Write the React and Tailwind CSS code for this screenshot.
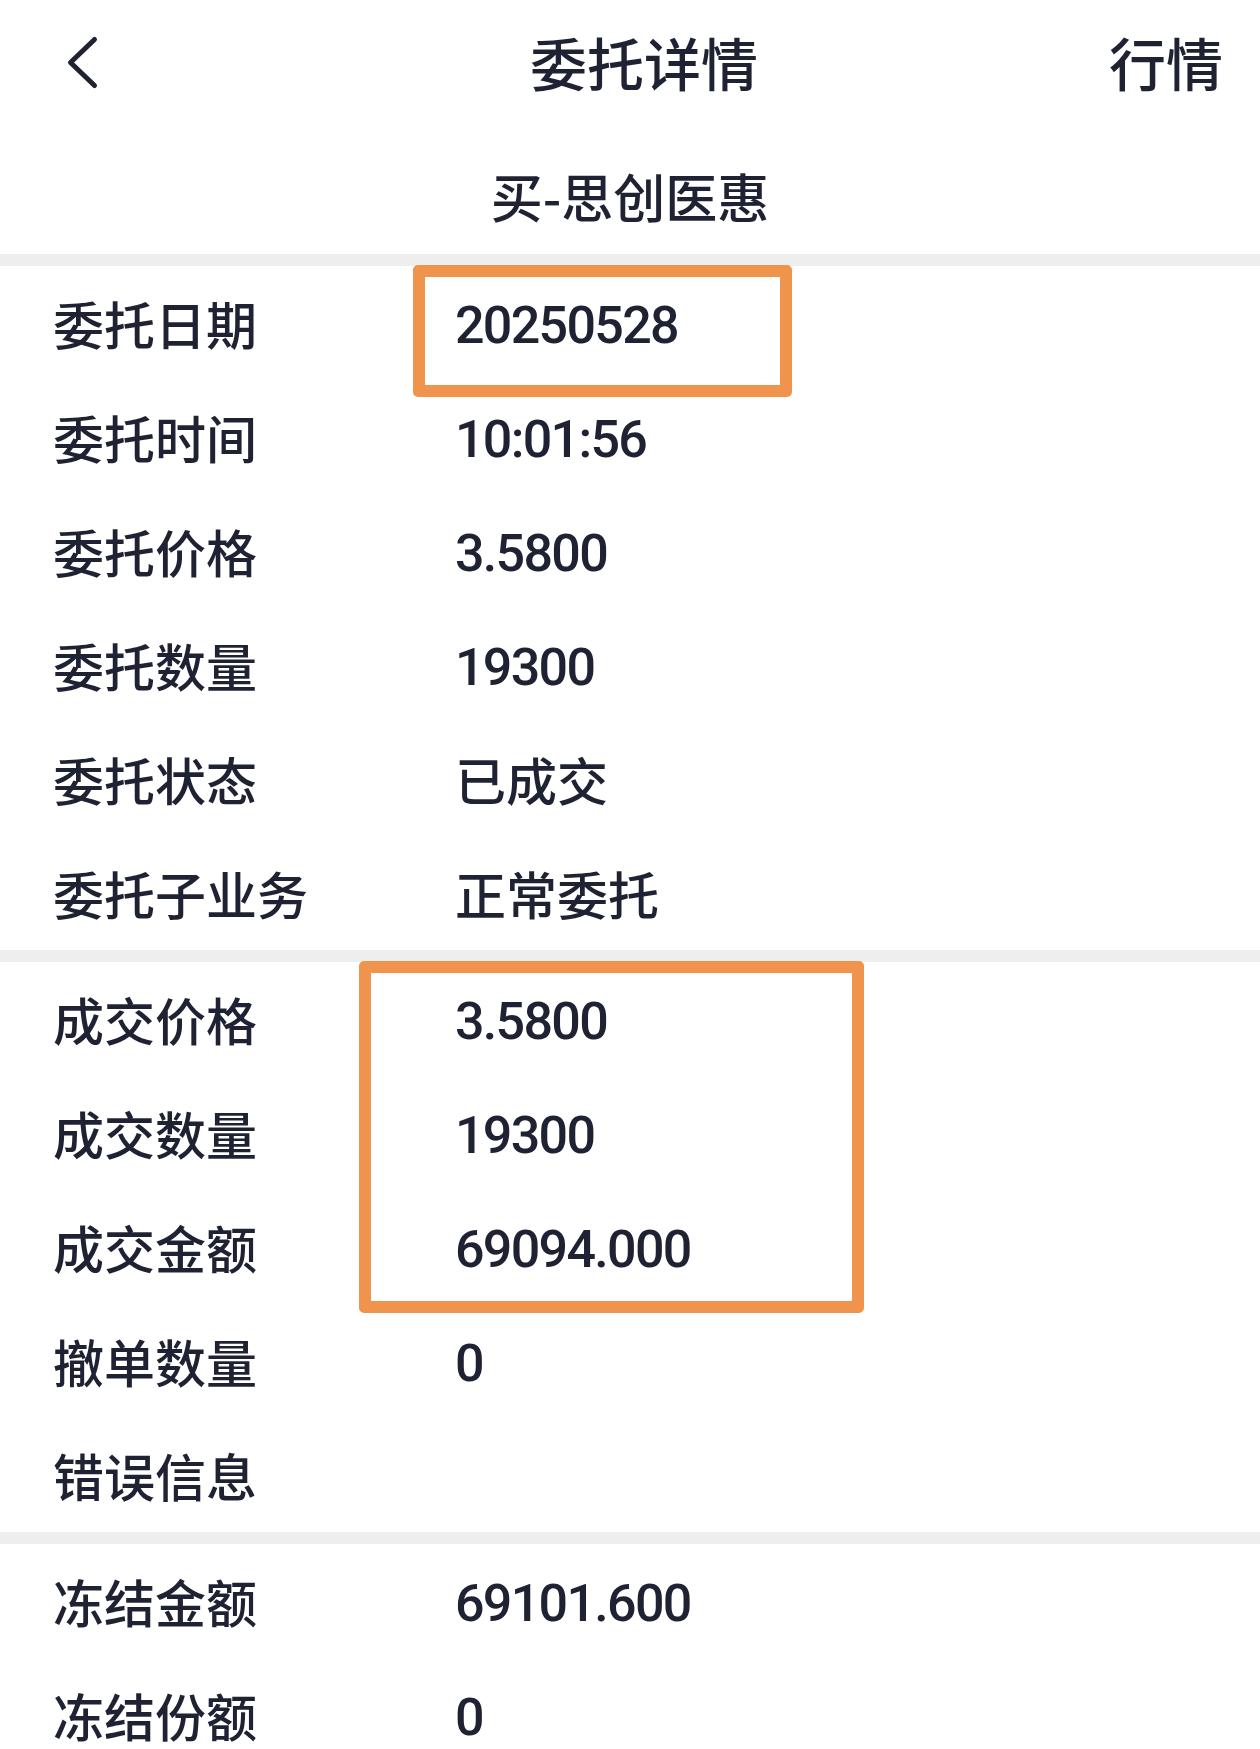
const cjk = { fontFamily: '"Noto Sans CJK SC", "Noto Sans", sans-serif' };
const num = { fontFamily: 'Roboto, "Noto Sans CJK SC", sans-serif' };

const sections = [
  [
    ['委托日期', '20250528'],
    ['委托时间', '10:01:56'],
    ['委托价格', '3.5800'],
    ['委托数量', '19300'],
    ['委托状态', '已成交'],
    ['委托子业务', '正常委托'],
  ],
  [
    ['成交价格', '3.5800'],
    ['成交数量', '19300'],
    ['成交金额', '69094.000'],
    ['撤单数量', '0'],
    ['错误信息', ''],
  ],
  [
    ['冻结金额', '69101.600'],
    ['冻结份额', '0'],
  ],
];

function Row({ label, value }) {
  const isNum = /^[0-9.:]+$/.test(value);
  return (
    <div className="flex h-[114px] items-center text-[#1e2232]">
      <div className="w-[455px] shrink-0 pl-[53px] text-[51px] font-medium leading-none" style={cjk}>
        {label}
      </div>
      <div
        className={
          isNum
            ? 'translate-y-[3px] text-[52px] font-medium leading-none tracking-[-1.7px]'
            : 'text-[51px] font-medium leading-none'
        }
        style={isNum ? num : cjk}
      >
        {value}
      </div>
    </div>
  );
}

function Mark({ className }) {
  return (
    <div
      className={
        'pointer-events-none absolute rounded-[5px] border-[12px] border-[#f0944d] ' + className
      }
    />
  );
}

export default function App() {
  return (
    <div className="w-[1260px] bg-white text-[#1e2232]" style={cjk}>
      {/* header */}
      <div className="flex h-[122px] items-center">
        <div className="flex h-full w-[179px] items-center pl-[64px] pt-[4px]">
          <svg width="36" height="58" viewBox="0 0 36 58" fill="none">
            <path
              d="M30.5 5.5 L6.5 28.5 L30.5 51.5"
              stroke="#1e2232"
              strokeWidth="5"
              strokeLinecap="round"
              strokeLinejoin="round"
            />
          </svg>
        </div>
        <div className="flex-1 text-center text-[57px] font-medium leading-none">委托详情</div>
        <div className="w-[151px] pr-[37px] text-right text-[57px] font-medium leading-none">行情</div>
      </div>
      <div className="pt-[44px] pb-[28px] text-center text-[52px] font-medium leading-[60px]">
        买-思创医惠
      </div>

      {sections.map((rows, i) => (
        <div key={i}>
          <div className="h-[12px] bg-[#eeeeee]" />
          <div className="relative">
            {rows.map(([l, v]) => (
              <Row key={l} label={l} value={v} />
            ))}
            {i === 0 && <Mark className="left-[413px] top-[-1px] h-[132px] w-[379px]" />}
            {i === 1 && <Mark className="left-[359px] top-[-1px] h-[352px] w-[505px]" />}
          </div>
        </div>
      ))}
    </div>
  );
}
